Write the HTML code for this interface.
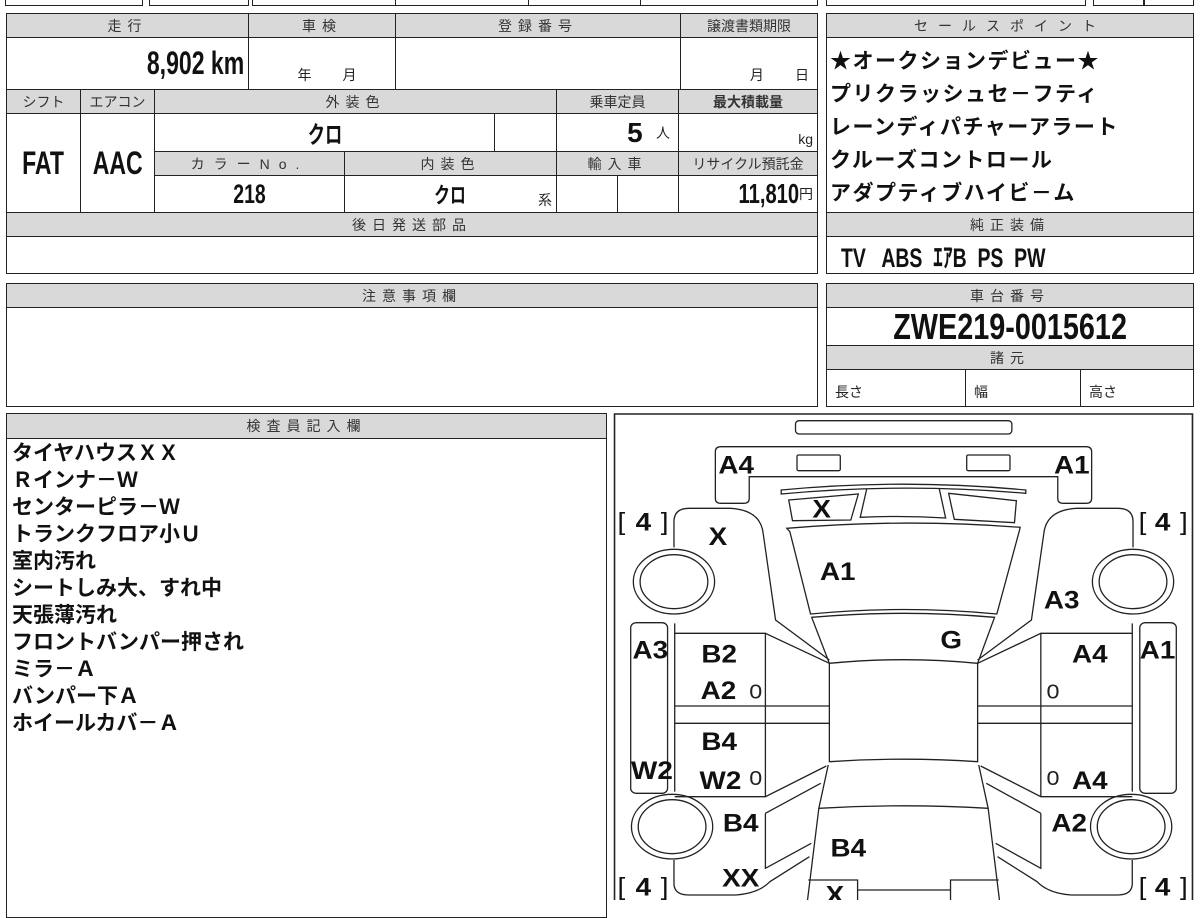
<!DOCTYPE html>
<html><head><meta charset="utf-8">
<style>
*{margin:0;padding:0;box-sizing:border-box}
body{width:1200px;height:900px;background:#fff;position:relative;overflow:hidden;font-family:"Liberation Sans","Noto Sans CJK JP",sans-serif;color:#111}
.b{position:absolute;border:1.5px solid #222;display:flex;align-items:center;justify-content:center;white-space:nowrap}
.h{background:#d9d9d9;font-size:14px;letter-spacing:6px;color:#333}
.big{font-family:"Liberation Sans","Noto Sans CJK JP",sans-serif;font-weight:bold;font-size:32px}
.n{display:inline-block;transform:scaleX(.72)}
.nr{transform-origin:right center}
.nl{transform-origin:left center}
.sm{font-size:14px;color:#222}
.sp{position:absolute;left:830px;font-weight:bold;font-size:21px;letter-spacing:1.5px;font-family:"Noto Sans CJK JP",sans-serif}
.ins{position:absolute;left:12px;font-weight:bold;font-size:21px;line-height:27px;font-family:"Liberation Sans","Noto Sans CJK JP",sans-serif}
</style></head><body>
<div class="b" style="left:5px;top:-10px;width:138px;height:16px"></div>
<div class="b" style="left:149px;top:-10px;width:100px;height:16px"></div>
<div class="b" style="left:252px;top:-10px;width:144px;height:16px"></div>
<div class="b" style="left:395px;top:-10px;width:134px;height:16px"></div>
<div class="b" style="left:528px;top:-10px;width:113px;height:16px"></div>
<div class="b" style="left:640px;top:-10px;width:178px;height:16px"></div>
<div class="b" style="left:826px;top:-10px;width:260px;height:16px"></div>
<div class="b" style="left:1093px;top:-10px;width:52px;height:16px"></div>
<div class="b" style="left:1143px;top:-10px;width:51px;height:16px"></div>

<div class="b h" style="left:6px;top:13px;width:243px;height:25px">走行</div>
<div class="b h" style="left:248px;top:13px;width:148px;height:25px">車検</div>
<div class="b h" style="left:395px;top:13px;width:286px;height:25px">登録番号</div>
<div class="b h" style="left:680px;top:13px;width:138px;height:25px;letter-spacing:0">譲渡書類期限</div>

<div class="b big" style="left:6px;top:37px;width:243px;height:53px;justify-content:flex-end;padding-right:4px"><span class="n nr">8,902 km</span></div>
<div class="b sm" style="left:248px;top:37px;width:148px;height:53px;align-items:flex-end;padding-bottom:4px;padding-left:10px">年&nbsp;&nbsp;&nbsp;&nbsp;&nbsp;&nbsp;&nbsp;&nbsp;月</div>
<div class="b" style="left:395px;top:37px;width:286px;height:53px"></div>
<div class="b sm" style="left:680px;top:37px;width:138px;height:53px;align-items:flex-end;padding-bottom:4px;justify-content:flex-end;padding-right:8px">月&nbsp;&nbsp;&nbsp;&nbsp;&nbsp;&nbsp;&nbsp;&nbsp;日</div>

<div class="b h" style="left:6px;top:89px;width:75px;height:25px;letter-spacing:0">シフト</div>
<div class="b h" style="left:80px;top:89px;width:75px;height:25px;letter-spacing:0">エアコン</div>
<div class="b h" style="left:154px;top:89px;width:403px;height:25px">外装色</div>
<div class="b h" style="left:556px;top:89px;width:123px;height:25px;letter-spacing:0">乗車定員</div>
<div class="b h" style="left:678px;top:89px;width:140px;height:25px;letter-spacing:0;font-weight:bold">最大積載量</div>

<div class="b big" style="left:6px;top:113px;width:75px;height:100px"><span class="n">FAT</span></div>
<div class="b big" style="left:80px;top:113px;width:75px;height:100px"><span class="n">AAC</span></div>
<div class="b big" style="left:154px;top:113px;width:341px;height:39px;font-size:24px"><span class="n">クロ</span></div>
<div class="b" style="left:494px;top:113px;width:63px;height:39px"></div>
<div class="b" style="left:556px;top:113px;width:123px;height:39px;justify-content:flex-end;padding-right:8px"><span class="big" style="font-size:28px">5</span>&nbsp;&nbsp;&nbsp;<span class="sm">人</span></div>
<div class="b sm" style="left:678px;top:113px;width:140px;height:39px;justify-content:flex-end;align-items:flex-end;padding:0 4px 4px 0">kg</div>

<div class="b h" style="left:154px;top:151px;width:191px;height:25px;letter-spacing:9px">カラーNo.</div>
<div class="b h" style="left:344px;top:151px;width:213px;height:25px">内装色</div>
<div class="b h" style="left:556px;top:151px;width:123px;height:25px">輸入車</div>
<div class="b h" style="left:678px;top:151px;width:140px;height:25px;letter-spacing:0">リサイクル預託金</div>

<div class="b big" style="left:154px;top:175px;width:191px;height:38px;font-size:27px"><span class="n">218</span></div>
<div class="b" style="left:344px;top:175px;width:213px;height:38px"><span class="big n" style="font-size:22px">クロ</span><span class="sm" style="position:absolute;right:4px;bottom:2px">系</span></div>
<div class="b" style="left:556px;top:175px;width:62px;height:38px"></div>
<div class="b" style="left:617px;top:175px;width:62px;height:38px"></div>
<div class="b" style="left:678px;top:175px;width:140px;height:38px;justify-content:flex-end;padding-right:4px"><span class="big n nr" style="font-size:28px">11,810</span><span class="sm">円</span></div>

<div class="b h" style="left:6px;top:212px;width:812px;height:25px">後日発送部品</div>
<div class="b" style="left:6px;top:236px;width:812px;height:38px"></div>

<div class="b h" style="left:826px;top:13px;width:368px;height:25px;letter-spacing:10px">セールスポイント</div>
<div class="b" style="left:826px;top:37px;width:368px;height:176px"></div>
<div class="sp" style="top:45px">★オークションデビュー★</div>
<div class="sp" style="top:78px">プリクラッシュセ－フティ</div>
<div class="sp" style="top:111px">レーンディパチャーアラート</div>
<div class="sp" style="top:144px">クルーズコントロール</div>
<div class="sp" style="top:177px">アダプティブハイビ－ム</div>
<div class="b h" style="left:826px;top:212px;width:368px;height:25px">純正装備</div>
<div class="b big" style="left:826px;top:236px;width:368px;height:38px;justify-content:flex-start;padding-left:14px;font-size:27px"><span class="n nl">TV&nbsp;&nbsp; ABS&nbsp; ｴｱB&nbsp; PS&nbsp; PW</span></div>

<div class="b h" style="left:826px;top:283px;width:368px;height:25px">車台番号</div>
<div class="b big" style="left:826px;top:307px;width:368px;height:39px;font-size:36px"><span class="n" style="transform:scaleX(.8)">ZWE219-0015612</span></div>
<div class="b h" style="left:826px;top:345px;width:368px;height:25px">諸元</div>
<div class="b sm" style="left:826px;top:369px;width:140px;height:38px;justify-content:flex-start;padding-left:8px;padding-top:8px">長さ</div>
<div class="b sm" style="left:965px;top:369px;width:116px;height:38px;justify-content:flex-start;padding-left:8px;padding-top:8px">幅</div>
<div class="b sm" style="left:1080px;top:369px;width:114px;height:38px;justify-content:flex-start;padding-left:8px;padding-top:8px">高さ</div>

<div class="b h" style="left:6px;top:283px;width:812px;height:25px">注意事項欄</div>
<div class="b" style="left:6px;top:307px;width:812px;height:100px"></div>

<div class="b h" style="left:6px;top:413px;width:601px;height:26px">検査員記入欄</div>
<div class="b" style="left:6px;top:438px;width:601px;height:480px"></div>
<div class="ins" style="top:440px">タイヤハウスＸＸ<br>Ｒインナ－Ｗ<br>センターピラ－Ｗ<br>トランクフロア小Ｕ<br>室内汚れ<br>シートしみ大、すれ中<br>天張薄汚れ<br>フロントバンパー押され<br>ミラ－Ａ<br>バンパー下Ａ<br>ホイールカバ－Ａ</div>

<svg style="position:absolute;left:610px;top:410px" width="590" height="490" viewBox="0 0 1568 1470" preserveAspectRatio="none">
<g fill="none" stroke="#222" stroke-width="1.3">
<rect x="12" y="12" width="1536" height="1500" stroke-width="1.6" vector-effect="non-scaling-stroke"/>
<rect x="493" y="32" width="575" height="40" rx="10" vector-effect="non-scaling-stroke"/>
<path vector-effect="non-scaling-stroke" d="M295,110 H1265 Q1280,110 1280,125 V265 Q1280,280 1265,280 H1205 Q1190,280 1190,265 V200 H370 V265 Q370,280 355,280 H295 Q280,280 280,265 V125 Q280,110 295,110 Z"/>
<rect x="497" y="135" width="115" height="47" rx="4" vector-effect="non-scaling-stroke"/>
<rect x="948" y="135" width="115" height="47" rx="4" vector-effect="non-scaling-stroke"/>
<path vector-effect="non-scaling-stroke" d="M455,240 Q780,205 1105,240 L1105,250 Q780,218 455,252 Z"/>
<path vector-effect="non-scaling-stroke" d="M475,270 L660,252 L640,330 L485,332 Z M900,250 L1080,272 L1075,338 L915,328 Z"/>
<path vector-effect="non-scaling-stroke" d="M682,238 L665,322 Q780,316 892,324 L875,236"/>
<path vector-effect="non-scaling-stroke" d="M470,355 Q780,325 1090,352 L1088,362 L1028,612 Q780,585 533,612 L478,365 Z"/>
<path vector-effect="non-scaling-stroke" d="M536,622 Q780,598 1022,622 L977,760 Q780,738 583,760 Z"/>
<path vector-effect="non-scaling-stroke" d="M583,760 V1055 Q780,1040 977,1055 V760"/>
<path vector-effect="non-scaling-stroke" d="M170,412 V335 Q170,295 210,295 H320 Q400,300 407,370 L440,630 L583,750"/>
<path vector-effect="non-scaling-stroke" d="M1390,412 V335 Q1390,295 1350,295 H1240 Q1160,300 1153,370 L1120,630 L977,750"/>
<path vector-effect="non-scaling-stroke" d="M172,640 V1145 M172,670 H413 L583,760 M413,670 V1160 M172,888 H583 M172,940 H583 M172,1160 H413 L575,1068"/>
<path vector-effect="non-scaling-stroke" d="M1388,640 V1145 M1388,670 H1145 L977,760 M1145,670 V1160 M1388,888 H977 M1388,940 H977 M1388,1160 H1145 L985,1068"/>
<path vector-effect="non-scaling-stroke" d="M580,1065 L555,1195 Q780,1180 1005,1195 L980,1065 M555,1195 L525,1470 M1005,1195 L1035,1470"/>
<path vector-effect="non-scaling-stroke" d="M527,1410 H658 V1470 M905,1470 V1410 H1033 M658,1440 H905"/>
<path vector-effect="non-scaling-stroke" d="M413,1210 L560,1120 M413,1210 V1375 L535,1300 M170,1350 V1420 Q170,1455 210,1455 H335 Q395,1450 425,1415 L530,1340"/>
<path vector-effect="non-scaling-stroke" d="M1145,1210 L1000,1120 M1145,1210 V1375 L1025,1300 M1388,1350 V1420 Q1388,1455 1348,1455 H1225 Q1165,1450 1135,1415 L1030,1340"/>
<rect x="55" y="638" width="98" height="512" rx="15" vector-effect="non-scaling-stroke"/>
<rect x="1408" y="638" width="97" height="512" rx="15" vector-effect="non-scaling-stroke"/>
<ellipse cx="170" cy="515" rx="108" ry="97" vector-effect="non-scaling-stroke"/><ellipse cx="170" cy="515" rx="90" ry="81" vector-effect="non-scaling-stroke"/>
<ellipse cx="1390" cy="515" rx="108" ry="97" vector-effect="non-scaling-stroke"/><ellipse cx="1390" cy="515" rx="90" ry="81" vector-effect="non-scaling-stroke"/>
<ellipse cx="165" cy="1250" rx="108" ry="97" vector-effect="non-scaling-stroke"/><ellipse cx="165" cy="1250" rx="90" ry="81" vector-effect="non-scaling-stroke"/>
<ellipse cx="1385" cy="1250" rx="108" ry="97" vector-effect="non-scaling-stroke"/><ellipse cx="1385" cy="1250" rx="90" ry="81" vector-effect="non-scaling-stroke"/>
</g>
<g font-family="Liberation Sans, sans-serif" font-weight="bold" font-size="74" fill="#111">
<text x="288" y="190">A4</text><text x="1180" y="190">A1</text>
<text x="538" y="322">X</text><text x="262" y="405">X</text>
<text x="558" y="510">A1</text><text x="1153" y="595">A3</text>
<text x="878" y="715">G</text><text x="60" y="745">A3</text>
<text x="243" y="757">B2</text><text x="241" y="867">A2</text>
<text x="1228" y="757">A4</text><text x="1408" y="745">A1</text>
<text x="243" y="1020">B4</text><text x="56" y="1107">W2</text>
<text x="238" y="1137">W2</text><text x="1228" y="1137">A4</text>
<text x="300" y="1265">B4</text><text x="1173" y="1265">A2</text>
<text x="586" y="1340">B4</text><text x="298" y="1430">XX</text>
<text x="573" y="1480">X</text>
<text x="20" y="360" font-weight="normal">[</text><text x="68" y="362">4</text><text x="135" y="360" font-weight="normal">]</text>
<text x="1405" y="360" font-weight="normal">[</text><text x="1448" y="362">4</text><text x="1515" y="360" font-weight="normal">]</text>
<text x="20" y="1455" font-weight="normal">[</text><text x="68" y="1457">4</text><text x="135" y="1455" font-weight="normal">]</text>
<text x="1405" y="1455" font-weight="normal">[</text><text x="1448" y="1457">4</text><text x="1515" y="1455" font-weight="normal">]</text>
</g>
<g font-family="Liberation Sans, sans-serif" font-size="62" fill="#222">
<text x="370" y="865">0</text><text x="1160" y="865">0</text>
<text x="370" y="1125">0</text><text x="1160" y="1125">0</text>
</g>
</svg>
</body></html>
